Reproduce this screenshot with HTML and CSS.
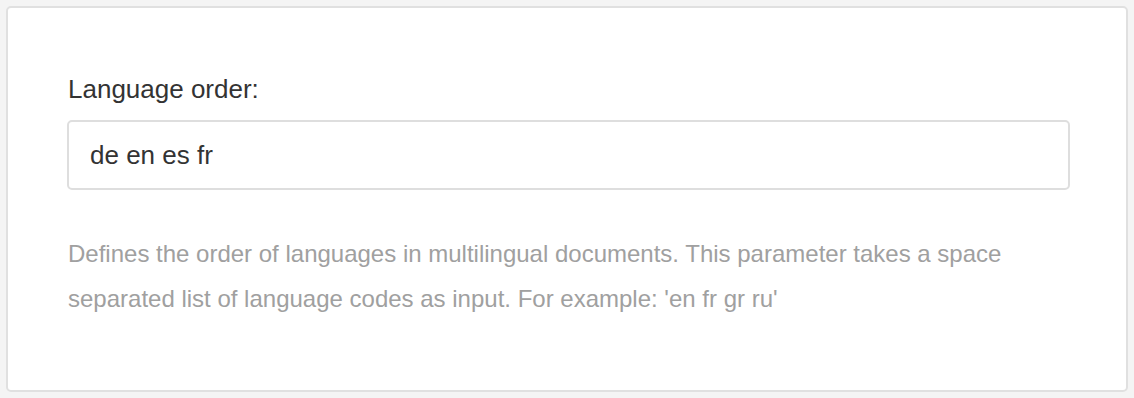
FILE: index.html
```html
<!DOCTYPE html>
<html>
<head>
<meta charset="utf-8">
<link rel="stylesheet" href="styles.css">
</head>
<body>
<div class="card">
  <label class="label" for="lang">Language order:</label>
  <input id="lang" class="input" type="text" value="de en es fr">
  <p class="help">Defines the order of languages in multilingual documents. This parameter takes a space separated list of language codes as input. For example: 'en fr gr ru'</p>
</div>
</body>
</html>
```
FILE: styles.css
```css
html, body {
  margin: 0;
  padding: 0;
  background: #f4f4f4;
}
body {
  padding: 6px;
  font-family: "Liberation Sans", Arial, sans-serif;
}
.card {
  box-sizing: border-box;
  width: 1122px;
  height: 386px;
  background: #fff;
  border: 2px solid #e0e0e0;
  border-radius: 5px;
  padding: 65px 58px 0 59px;
  display: flex;
  flex-direction: column;
}
.label {
  font-size: 26px;
  color: #333;
  line-height: 32px;
  margin: 0 0 15px 1px;
}
.input {
  box-sizing: border-box;
  width: 1003px;
  height: 70px;
  border: 2px solid #dedede;
  border-radius: 5px;
  padding: 0 21px;
  font-family: "Liberation Sans", Arial, sans-serif;
  font-size: 26px;
  color: #333;
  outline: none;
}
.help {
  margin: 41px 0 0 1px;
  font-size: 24px;
  line-height: 45px;
  color: #a0a0a0;
  max-width: 960px;
}
```
